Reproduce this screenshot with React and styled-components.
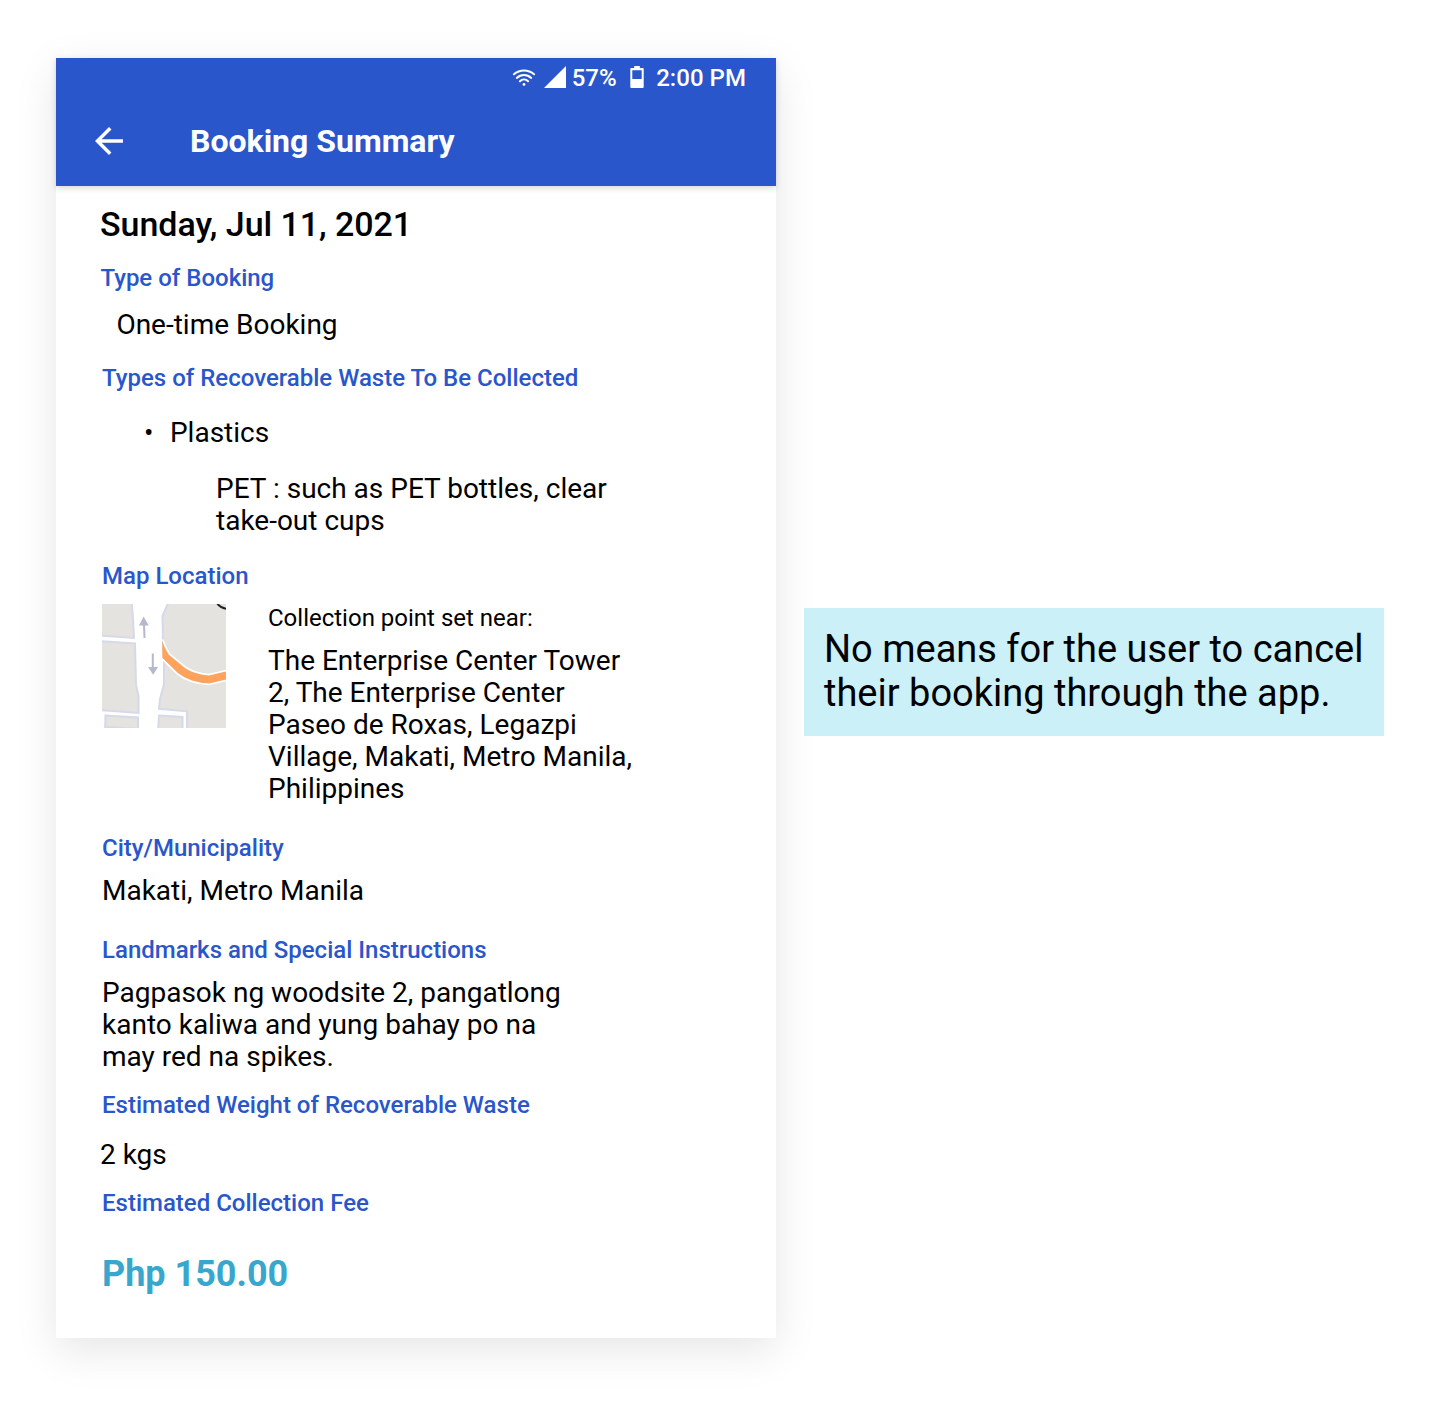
import React from 'react';
import styled, { createGlobalStyle } from 'styled-components';

const GlobalStyle = createGlobalStyle`
  *, *::before, *::after { box-sizing: border-box; }
  html, body { margin: 0; background: #fff; }
  body { font-family: Roboto, "Liberation Sans", sans-serif; color: #000; }
`;

const Board = styled.main`
  width: 1432px;
  height: 1404px;
  padding: 58px 0 0 56px;
  display: flex;
  align-items: flex-start;
  gap: 28px;
  overflow: hidden;
`;

const Phone = styled.article`
  flex: none;
  width: 720px;
  height: 1280px;
  display: flex;
  flex-direction: column;
  background: #fff;
  box-shadow: 0 12px 40px rgba(0, 0, 0, 0.1);
`;

const Header = styled.header`
  flex: none;
  height: 128px;
  background: #2a56cb;
  color: #fff;
  box-shadow: 0 2px 6px rgba(0, 0, 0, 0.16);
`;

const StatusBar = styled.div`
  height: 40px;
  padding-right: 30px;
  display: flex;
  align-items: center;
  justify-content: flex-end;
  font-size: 24px;
  line-height: 28px;
  font-weight: 500;
  white-space: nowrap;
`;

const StatusIcon = styled.svg`
  flex: none;
  margin: 0 0 ${(p) => p.$lift ?? 0}px ${(p) => p.$gap ?? 0}px;
`;

const Percent = styled.span`
  width: 45px;
  margin: 0 13.5px 0 5.5px;
`;

const Clock = styled.span`
  margin-left: 12px;
  letter-spacing: 0.05px;
`;

const AppBar = styled.div`
  height: 88px;
  padding: 0 32px;
  display: flex;
  align-items: center;
  gap: 60px;
`;

const BackButton = styled.button`
  width: 42px;
  height: 42px;
  margin-top: -2px;
  padding: 0;
  border: 0;
  background: none;
  color: inherit;

  svg { display: block; }
`;

const Title = styled.h1`
  margin: -2px 0 0;
  font-size: 32px;
  line-height: 38px;
  font-weight: 700;
`;

const Content = styled.div`
  padding: 18px 44px 0;
  display: flex;
  flex-direction: column;
`;

const DateLine = styled.h2`
  margin: 0;
  font-size: 34px;
  line-height: 40px;
  font-weight: 500;
  letter-spacing: -0.05px;
`;

const Label = styled.h3`
  margin: ${(p) => p.$gap}px 0 0 ${(p) => p.$indent ?? 2}px;
  font-size: 24px;
  line-height: 28px;
  font-weight: 500;
  color: #2a56cb;
`;

const Value = styled.p`
  margin: ${(p) => p.$gap}px 0 0 ${(p) => p.$indent ?? 2}px;
  font-size: 28px;
  line-height: 32px;
  white-space: pre-line;
`;

const WasteList = styled.ul`
  margin: 25px 0 0 44px;
  padding: 0;
  list-style: none;
  font-size: 28px;
  line-height: 32px;
`;

const WasteName = styled.div`
  display: flex;
  gap: 16.5px;
`;

const MapRow = styled.div`
  margin: 14px 0 0 2px;
  display: flex;
  gap: 42px;

  svg { flex: none; }
`;

const Hint = styled.p`
  margin: 0;
  font-size: 24px;
  line-height: 28px;
`;

const Fee = styled.strong`
  margin: 36px 0 0 2px;
  font-size: 36px;
  line-height: 42px;
  font-weight: 700;
  color: #38a6cd;
`;

const Note = styled.aside`
  flex: none;
  width: 580px;
  height: 128px;
  margin-top: 550px;
  padding: 19px 20px;
  background: #cbf0f8;
  font-size: 38px;
  line-height: 44px;
  white-space: pre-line;
`;

const WifiIcon = () => (
  <StatusIcon width="24" height="22" viewBox="0 0 24 22" fill="none" stroke="#fff" strokeWidth="2" strokeLinecap="round">
    <path d="M1.9 7.3a15 15 0 0 1 20.2 0" />
    <path d="M4.8 10.9a10.5 10.5 0 0 1 14.4 0" />
    <path d="M7.9 14.2a6 6 0 0 1 8.2 0" />
    <circle cx="12" cy="17.4" r="1.4" fill="#fff" stroke="none" />
  </StatusIcon>
);

const SignalIcon = () => (
  <StatusIcon width="22" height="22" viewBox="0 0 22 22" $gap={8} $lift={2}>
    <path d="M22 0v22H0z" fill="#fff" />
  </StatusIcon>
);

const BatteryIcon = () => (
  <StatusIcon width="14" height="22" viewBox="0 0 14 22" $lift={2}>
    <path
      fill="#fff"
      fillRule="evenodd"
      d="M4.2 0h5.6v2H12.7a1 1 0 0 1 1 1V21a1 1 0 0 1-1 1H1.3a1 1 0 0 1-1-1V3a1 1 0 0 1 1-1H4.2zM2.3 4.3V13H11.7V4.3z"
    />
  </StatusIcon>
);

const BackIcon = () => (
  <svg width="42" height="42" viewBox="0 0 24 24" fill="currentColor">
    <path d="M20 11H7.83l5.59-5.59L12 4l-8 8 8 8 1.41-1.41L7.83 13H20v-2z" />
  </svg>
);

const MapThumb = () => (
  <svg width="124" height="124" viewBox="0 0 124 124">
    <rect width="124" height="124" fill="#fff" />
    <g fill="#e4e3df" stroke="#d6d9e8" strokeWidth="2">
      <path d="M-3-3H29.5L31 14 32 34-3 31.5z" />
      <path d="M-3 37 33 39.5 34 81 36.500 92V109L-3 106z" />
      <path d="M3.5 111.5 36 113.5V127H3z" />
      <path d="M67-3 60.5 12 61 38 62 54V80L58 95 57 104.8 85 107.3V127H127V-3z" />
      <path d="M57 111.5 80.5 113V127H56z" />
    </g>
    <path d="M3 123 36 125" stroke="#d6d9e8" strokeWidth="2" />
    <path
      d="M60.3 37C62 42 64 47 67 51L83 64Q87 67 92 68.500 99 71 107 71.500L126 67V75L107 79.500Q98 79 90 76.500 82 74 76 69L60.300 54z"
      fill="#ffa35c"
    />
    <path
      d="M60.800 35.500C62.500 41 65 46 67.600 50L83.500 63Q88 66 92.300 67.500 99 70 107 70.500L126 66M126 76 107 80.500Q98 80 89.700 77.500 82 75 75.300 70L60.300 55"
      fill="none"
      stroke="#fff"
      strokeWidth="1.6"
    />
    <g stroke="#b4b9cf" strokeWidth="2" fill="none">
      <path d="M42.500 34 41.900 18" />
      <path d="M50.800 49.500V66" />
    </g>
    <g fill="#b4b9cf">
      <path d="M41.600 12.500 46.800 21.500H37z" />
      <path d="M51.200 70.800 46 63H56z" />
    </g>
    <path d="M115-1Q118 4 125 5" fill="none" stroke="#222" strokeWidth="2" />
  </svg>
);

export default function App() {
  return (
    <>
      <GlobalStyle />
      <Board>
        <Phone>
          <Header>
            <StatusBar>
              <WifiIcon />
              <SignalIcon />
              <Percent>57%</Percent>
              <BatteryIcon />
              <Clock>2:00 PM</Clock>
            </StatusBar>
            <AppBar>
              <BackButton aria-label="Back"><BackIcon /></BackButton>
              <Title>Booking Summary</Title>
            </AppBar>
          </Header>
          <Content>
            <DateLine>Sunday, Jul 11, 2021</DateLine>
            <Label $gap={20} $indent={0.4}>Type of Booking</Label>
            <Value $gap={17} $indent={16.4}>One-time Booking</Value>
            <Label $gap={23}>Types of Recoverable Waste To Be Collected</Label>
            <WasteList>
              <li>
                <WasteName><span>•</span>Plastics</WasteName>
                <Value $gap={24} $indent={72}>{'PET : such as PET bottles, clear\ntake-out cups'}</Value>
              </li>
            </WasteList>
            <Label $gap={25}>Map Location</Label>
            <MapRow>
              <MapThumb />
              <div>
                <Hint>Collection point set near:</Hint>
                <Value $gap={13} $indent={0}>
                  {'The Enterprise Center Tower\n2, The Enterprise Center\nPaseo de Roxas, Legazpi\nVillage, Makati, Metro Manila,\nPhilippines'}
                </Value>
              </div>
            </MapRow>
            <Label $gap={29}>City/Municipality</Label>
            <Value $gap={13}>Makati, Metro Manila</Value>
            <Label $gap={29}>Landmarks and Special Instructions</Label>
            <Value $gap={13}>{'Pagpasok ng woodsite 2, pangatlong\nkanto kaliwa and yung bahay po na\nmay red na spikes.'}</Value>
            <Label $gap={18}>Estimated Weight of Recoverable Waste</Label>
            <Value $gap={20} $indent={0}>2 kgs</Value>
            <Label $gap={18}>Estimated Collection Fee</Label>
            <Fee>Php 150.00</Fee>
          </Content>
        </Phone>
        <Note>{'No means for the user to cancel\ntheir booking through the app.'}</Note>
      </Board>
    </>
  );
}
